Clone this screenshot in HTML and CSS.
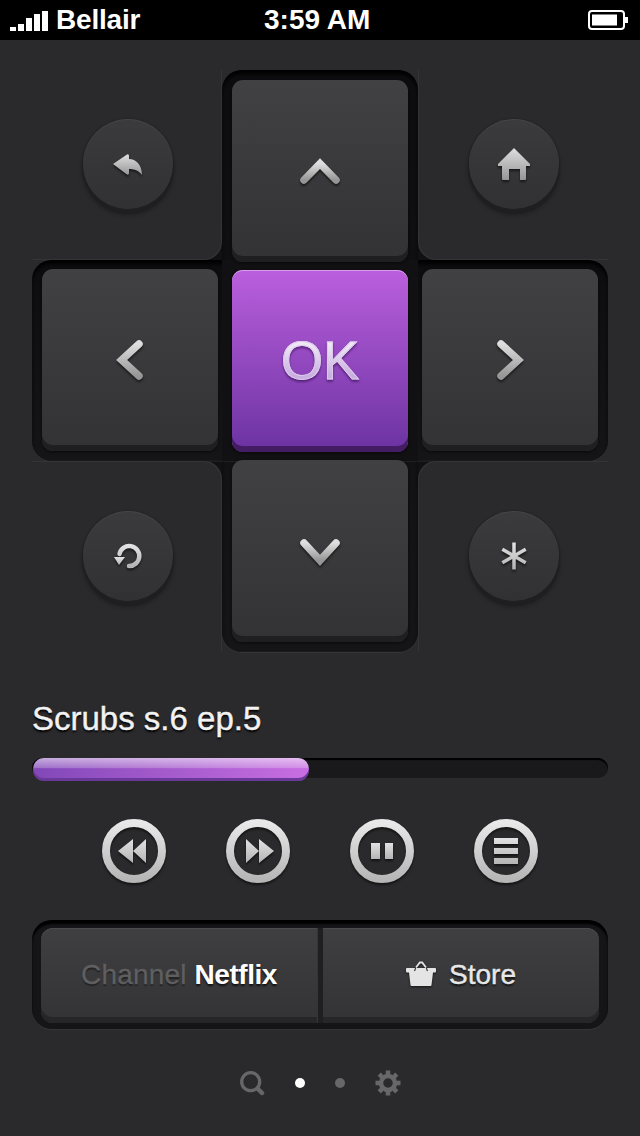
FILE: index.html
```html
<!DOCTYPE html>
<html lang="en">
<head>
<meta charset="utf-8">
<title>Remote</title>
<link rel="stylesheet" href="styles.css">
</head>
<body>
<svg class="defs" aria-hidden="true">
  <defs>
    <linearGradient id="metal" x1="0" y1="0" x2="0" y2="1">
      <stop offset="0" stop-color="#dedede"/>
      <stop offset="1" stop-color="#969696"/>
    </linearGradient>
    <linearGradient id="ring" x1="0" y1="0" x2="0" y2="1">
      <stop offset="0" stop-color="#e8e8e8"/>
      <stop offset="1" stop-color="#b6b6b6"/>
    </linearGradient>
    <linearGradient id="glyph" x1="0" y1="0" x2="0" y2="1">
      <stop offset="0" stop-color="#e2e2e2"/>
      <stop offset="1" stop-color="#b4b4b4"/>
    </linearGradient>
  </defs>
</svg>

<header class="status">
  <svg class="signal" width="38" height="20" viewBox="0 0 38 20">
    <rect x="0" y="16" width="6" height="4" fill="#fff"/>
    <rect x="8" y="13" width="6" height="7" fill="#fff"/>
    <rect x="16" y="7" width="6" height="13" fill="#fff"/>
    <rect x="24" y="3" width="6" height="17" fill="#fff"/>
    <rect x="32" y="0" width="6" height="20" fill="#fff"/>
  </svg>
  <span class="carrier">Bellair</span>
  <span class="clock">3:59 AM</span>
  <svg class="battery" width="40" height="20" viewBox="0 0 40 20">
    <rect x="1" y="1" width="35" height="18" rx="3" fill="none" stroke="#fff" stroke-width="2"/>
    <rect x="4" y="4.500" width="25" height="11" fill="#fff"/>
    <rect x="37" y="7" width="3" height="6" fill="#fff"/>
  </svg>
</header>

<main class="remote">
  <section class="dpad">
    <div class="well-core"></div>
    <div class="well-v"></div>
    <div class="well-h"></div>
    <div class="well-center"></div>

    <div class="panel panel-tl">
      <button class="round">
        <svg class="icon" width="40" height="40" viewBox="0 0 40 40"><path fill="url(#metal)" d="M5 20 L19 10.500 Q21 9.800 21 12 L21 15 C28 15 34 21 34 31 C31 27 27 25 21 25 L21 29 Q21 31.500 19 30.500 Z"/></svg>
      </button>
    </div>
    <div class="panel panel-tr">
      <button class="round">
        <svg class="icon" width="40" height="40" viewBox="0 0 40 40"><path fill="url(#metal)" d="M20 4 L36 20 L36 22 L32 22 L32 35 Q32 36 31 36 L26 36 L26 25 L15 25 L15 36 L9 36 Q8 36 8 35 L8 22 L4 22 L4 20 Z"/></svg>
      </button>
    </div>
    <div class="panel panel-bl">
      <button class="round">
        <svg class="icon" width="40" height="40" viewBox="0 0 40 40"><path fill="none" stroke="url(#glyph)" stroke-width="4.500" stroke-linecap="round" d="M11.500 18 A10 10 0 1 1 21 30"/><path fill="url(#glyph)" d="M6 21 H17 L11 29 Z"/></svg>
      </button>
    </div>
    <div class="panel panel-br">
      <button class="round">
        <svg class="icon" width="40" height="40" viewBox="0 0 40 40"><path fill="none" stroke="url(#glyph)" stroke-width="3.500" d="M20 6.500 V33.500 M8.300 13.200 L31.700 26.800 M8.300 26.800 L31.700 13.200"/></svg>
      </button>
    </div>

    <button class="key key-up">
      <svg class="icon" width="48" height="40" viewBox="0 0 48 40"><path class="chev" stroke="url(#metal)" d="M8 29 L24 12.600 L40 29"/></svg>
    </button>
    <button class="key key-left">
      <svg class="icon" width="40" height="40" viewBox="0 0 40 40"><path class="chev" stroke="url(#metal)" d="M29 4 L11.600 20 L29 36"/></svg>
    </button>
    <button class="key key-ok"><span class="ok-label">OK</span></button>
    <button class="key key-right">
      <svg class="icon" width="40" height="40" viewBox="0 0 40 40"><path class="chev" stroke="url(#metal)" d="M11 4 L28.400 20 L11 36"/></svg>
    </button>
    <button class="key key-down">
      <svg class="icon" width="48" height="40" viewBox="0 0 48 40"><path class="chev" stroke="url(#metal)" d="M8 12 L24 29.400 L40 12"/></svg>
    </button>
  </section>

  <h1 class="title">Scrubs s.6 ep.5</h1>
  <div class="track"><div class="fill"></div></div>

  <div class="transport">
    <button class="ctl">
      <svg class="icon" width="64" height="64" viewBox="0 0 64 64"><circle cx="32" cy="32" r="28" fill="none" stroke="url(#ring)" stroke-width="8"/><path fill="url(#glyph)" d="M16 32 L31 20 V32 L44 20 V44 L31 32 V44 Z"/></svg>
    </button>
    <button class="ctl">
      <svg class="icon" width="64" height="64" viewBox="0 0 64 64"><circle cx="32" cy="32" r="28" fill="none" stroke="url(#ring)" stroke-width="8"/><path fill="url(#glyph)" d="M20 20 L33 32 V20 L48 32 L33 44 V32 L20 44 Z"/></svg>
    </button>
    <button class="ctl">
      <svg class="icon" width="64" height="64" viewBox="0 0 64 64"><circle cx="32" cy="32" r="28" fill="none" stroke="url(#ring)" stroke-width="8"/><path fill="url(#glyph)" d="M21 24 H30 V40 H21 Z M35 24 H43 V40 H35 Z"/></svg>
    </button>
    <button class="ctl">
      <svg class="icon" width="64" height="64" viewBox="0 0 64 64"><circle cx="32" cy="32" r="28" fill="none" stroke="url(#ring)" stroke-width="8"/><path fill="url(#glyph)" d="M20 19 H44 V25 H20 Z M20 29 H44 V35 H20 Z M20 39 H44 V45 H20 Z"/></svg>
    </button>
  </div>

  <div class="actions">
    <div class="action-group">
      <button class="action action-left"><span class="dim">Channel</span>&nbsp;<strong class="bright">Netflix</strong></button>
      <div class="divider"></div>
      <button class="action action-right">
        <svg class="basket" width="30" height="26" viewBox="0 0 30 26"><path fill="#e4e4e4" d="M1 7 H29 Q30 7 30 8 V10 Q30 11.500 29 11.500 H27 L25.500 24 Q25.400 25 24.500 25 H5.500 Q4.600 25 4.500 24 L3 11.500 H1 Q0 11.500 0 10 V8 Q0 7 1 7 Z"/><path fill="none" stroke="#e4e4e4" stroke-width="1.800" d="M10 6.500 L13.800 1.500 H16.200 L20 6.500"/><path fill="none" stroke="#3a3a3c" stroke-width="1.200" d="M9.700 7 L8.500 10 M20.300 7 L21.500 10"/></svg>
        <span class="store">Store</span>
      </button>
    </div>
  </div>

  <nav class="pager">
    <svg width="26" height="26" viewBox="0 0 26 26"><circle cx="11.700" cy="11.700" r="9" fill="none" stroke="#676769" stroke-width="3.300"/><path d="M18.500 18.500 L23 23" stroke="#676769" stroke-width="4.500" stroke-linecap="round"/></svg>
    <span class="dot dot-on"></span>
    <span class="dot"></span>
    <svg width="26" height="26" viewBox="0 0 26 26"><path d="M13 .5 V25.500 M.5 13 H25.500 M4.200 4.200 L21.800 21.800 M21.800 4.200 L4.200 21.800" stroke="#676769" stroke-width="4.500"/><circle cx="13" cy="13" r="7" fill="#2a2a2c" stroke="#676769" stroke-width="4.500"/></svg>
  </nav>
</main>
</body>
</html>
```
FILE: styles.css
```css
* { box-sizing: border-box; }
html, body { margin: 0; padding: 0; }
body {
  width: 640px;
  height: 1136px;
  overflow: hidden;
  background: #2a2a2c;
  font-family: "Liberation Sans", Arial, sans-serif;
  color: #fff;
}
button {
  margin: 0;
  padding: 0;
  border: 0;
  font: inherit;
  color: inherit;
  background: none;
}
.defs { position: absolute; width: 0; height: 0; }
svg { display: block; }

/* status bar */
.status {
  display: flex;
  align-items: center;
  height: 40px;
  padding: 0 12px 0 10px;
  background: #000;
  font-size: 28px;
  font-weight: 700;
  line-height: 40px;
}
.signal { margin-top: 2px; }
.carrier { margin-left: 8px; width: 86px; letter-spacing: -.2px; }
.clock { margin-left: 122px; }
.battery { margin-left: auto; }

/* main column */
.remote { padding: 30px 32px 0; }

/* d-pad */
.dpad {
  display: grid;
  grid-template-columns: 190px 196px 190px;
  grid-template-rows: 190px 201px 191px;
  width: 576px;
}
.well-core {
  grid-column: 2;
  grid-row: 2;
  margin: -19px;
  background: #111113;
}
.well-v, .well-h {
  border-radius: 20px;
  background: linear-gradient(#0d0d0f, #151517);
  box-shadow: inset 0 5px 4px -1px #000, inset 0 -1px 0 #19191b, 0 1px 0 rgba(255,255,255,.06);
}
.well-v { grid-column: 2; grid-row: 1 / 4; }
.well-h { grid-column: 1 / 4; grid-row: 2; }
.well-center { grid-column: 2; grid-row: 2; background: #111113; }

.panel {
  display: flex;
  align-items: center;
  justify-content: center;
  padding-left: 2px;
  background: #2a2a2c;
}
.panel-tl { grid-column: 1; grid-row: 1; padding-top: 2px; border-radius: 0 0 18px 0; box-shadow: inset -1px -1px 0 rgba(255,255,255,.05); }
.panel-tr { grid-column: 3; grid-row: 1; padding-top: 2px; border-radius: 0 0 0 18px; box-shadow: inset 1px -1px 0 rgba(255,255,255,.05); }
.panel-bl { grid-column: 1; grid-row: 3; padding-top: 3px; border-radius: 0 18px 0 0; box-shadow: inset -1px 1px 0 rgba(255,255,255,.05); }
.panel-br { grid-column: 3; grid-row: 3; padding-top: 3px; border-radius: 18px 0 0 0; box-shadow: inset 1px 1px 0 rgba(255,255,255,.05); }

.round {
  display: flex;
  align-items: center;
  justify-content: center;
  width: 90px;
  height: 90px;
  margin-bottom: 4px;
  border-radius: 50%;
  background: linear-gradient(#3b3b3d, #313133);
  box-shadow: inset 0 1px 0 rgba(255,255,255,.05), 0 4px 0 #1f1f21, 0 5px 5px rgba(0,0,0,.45), 0 0 2px rgba(0,0,0,.35);
}
.icon { filter: drop-shadow(0 2px 1px rgba(0,0,0,.55)); }
.chev { fill: none; stroke-width: 7.500; stroke-linecap: round; stroke-linejoin: miter; }

.key {
  display: flex;
  align-items: center;
  justify-content: center;
  align-self: start;
  width: 176px;
  height: 182px;
  border-radius: 11px;
  background: linear-gradient(#414143, #333335 96%);
  box-shadow: inset 0 -6px 0 #1f1f21, 0 1px 3px rgba(0,0,0,.6);
}
.key-up { grid-column: 2; grid-row: 1; margin: 10px 0 0 10px; }
.key-left { grid-column: 1; grid-row: 2; margin: 9px 0 0 10px; }
.key-ok {
  grid-column: 2;
  grid-row: 2;
  margin: 10px 0 0 10px;
  background: linear-gradient(#ba5fdd, #6e34a3 96%);
  box-shadow: inset 0 1px 0 #d99cf0, inset 0 -6px 0 #431c63, 0 1px 3px rgba(0,0,0,.6);
}
.key-right { grid-column: 3; grid-row: 2; margin: 9px 0 0 4px; }
.key-down { grid-column: 2; grid-row: 3; margin: -1px 0 0 10px; }
.ok-label {
  margin-bottom: 2px;
  font-size: 54px;
  line-height: 1;
  background: linear-gradient(#f0e8f7 20%, #c9aee0 80%);
  -webkit-background-clip: text;
  background-clip: text;
  color: transparent;
  -webkit-text-stroke: 1px #dccbea;
  filter: drop-shadow(0 2px 1px rgba(50,10,80,.6));
}

/* now playing */
.title {
  margin: 48px 0 20px;
  font-size: 33px;
  font-weight: 400;
  line-height: 38px;
  color: #f2f2f2;
  -webkit-text-stroke: .4px #f2f2f2;
  text-shadow: 0 2px 2px #000;
}
.track {
  height: 20px;
  border-radius: 10px;
  background: #19191b;
  box-shadow: inset 0 2px 1px #000;
}
.fill {
  width: 276px;
  height: 23px;
  margin-left: 1px;
  border-radius: 11px;
  background:
    linear-gradient(rgba(255,255,255,.55), rgba(255,255,255,.22) 44%, rgba(255,255,255,0) 46%),
    linear-gradient(90deg, #8248b8, #c86ee2);
  box-shadow: inset 0 -3px 0 #6a3898;
}

/* transport */
.transport {
  display: flex;
  gap: 60px;
  margin: 41px 0 0 70px;
}
.ctl { width: 64px; height: 64px; }

/* actions */
.actions {
  height: 109px;
  margin-top: 37px;
  padding: 8px 9px 0;
  border-radius: 20px;
  background: #151517;
  box-shadow: inset 0 4px 2px #000, 0 1px 0 rgba(255,255,255,.05);
}
.action-group { display: flex; height: 95px; }
.action {
  display: flex;
  align-items: center;
  justify-content: center;
  flex: 1;
  padding-bottom: 2px;
  font-size: 28px;
  background: linear-gradient(#3f3f41, #343436 94%);
  box-shadow: inset 0 1px 0 #4b4b4d, inset 0 -6px 0 #262628;
}
.action-left { border-radius: 12px 0 0 12px; }
.action-right { border-radius: 0 12px 12px 0; gap: 13px; }
.divider {
  width: 6px;
  background: #1f1f21;
  box-shadow: inset 1px 0 0 rgba(255,255,255,.1);
}
.dim { color: #5f5f61; letter-spacing: .2px; -webkit-text-stroke: .3px #5f5f61; text-shadow: 0 2px 1px rgba(0,0,0,.4); }
.bright { font-weight: 700; letter-spacing: -.45px; text-shadow: 0 2px 2px rgba(0,0,0,.7); }
.store { color: #e8e8e8; -webkit-text-stroke: .4px #e8e8e8; text-shadow: 0 2px 2px rgba(0,0,0,.7); }
.basket { margin-bottom: 2px; filter: drop-shadow(0 1px 1px rgba(0,0,0,.6)); }

/* pager */
.pager {
  display: flex;
  align-items: center;
  justify-content: center;
  gap: 30px;
  margin-top: 41px;
}
.dot {
  width: 10px;
  height: 10px;
  border-radius: 50%;
  background: #676769;
}
.dot-on { background: #fff; }
```
